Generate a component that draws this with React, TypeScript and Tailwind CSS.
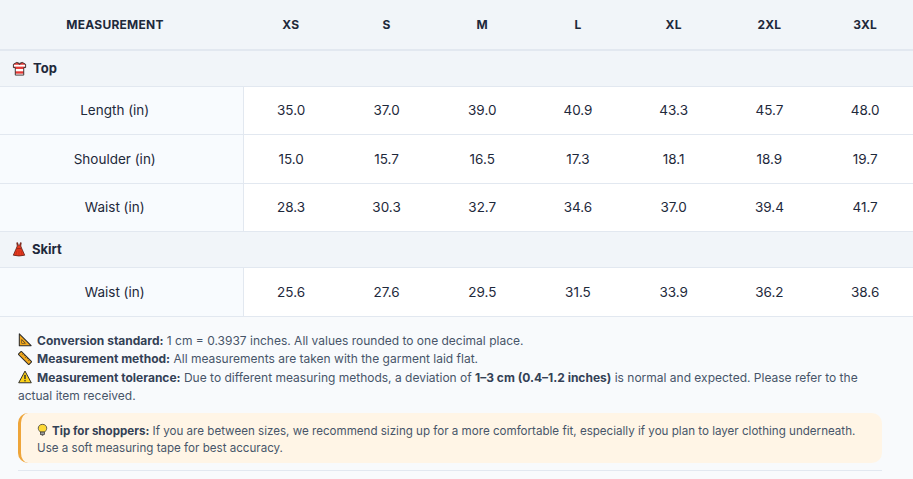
import React from "react";

const sizes = ["XS", "S", "M", "L", "XL", "2XL", "3XL"];

const topRows: [string, string[]][] = [
  ["Length (in)", ["35.0", "37.0", "39.0", "40.9", "43.3", "45.7", "48.0"]],
  ["Shoulder (in)", ["15.0", "15.7", "16.5", "17.3", "18.1", "18.9", "19.7"]],
  ["Waist (in)", ["28.3", "30.3", "32.7", "34.6", "37.0", "39.4", "41.7"]],
];
const skirtRows: [string, string[]][] = [
  ["Waist (in)", ["25.6", "27.6", "29.5", "31.5", "33.9", "36.2", "38.6"]],
];

function ShirtIcon() {
  return (
    <svg width="15" height="15" viewBox="0 0 16 16" className="inline-block shrink-0">
      <defs>
        <clipPath id="shirtclip">
          <path d="M5 1.5 L1.5 3.5 L1.5 7 L3.5 7 L3.5 15 L12.5 15 L12.5 7 L14.5 7 L14.5 3.5 L11 1.5 Q8 3.5 5 1.5 Z" />
        </clipPath>
      </defs>
      <g clipPath="url(#shirtclip)">
        <rect x="0" y="0" width="16" height="16" fill="#ffffff" />
        <rect x="0" y="1" width="16" height="3" fill="#e53935" />
        <rect x="0" y="6" width="16" height="2.5" fill="#e53935" />
        <rect x="0" y="11" width="16" height="2.5" fill="#e53935" />
      </g>
      <path
        d="M5 1.5 L1.5 3.5 L1.5 7 L3.5 7 L3.5 15 L12.5 15 L12.5 7 L14.5 7 L14.5 3.5 L11 1.5 Q8 3.5 5 1.5 Z"
        fill="none"
        stroke="#3b2a2a"
        strokeWidth="1"
        strokeLinejoin="round"
      />
      <path d="M6 2 L8 4 L10 2" fill="none" stroke="#3b2a2a" strokeWidth="0.8" />
    </svg>
  );
}

function DressIcon() {
  return (
    <svg width="14" height="15" viewBox="0 0 16 17" className="inline-block shrink-0">
      <path
        d="M5.5 0.8 L6 4.5 L4.8 7.5 L1.5 15 Q8 16.8 14.5 15 L11.2 7.5 L10 4.5 L10.5 0.8 L9.6 0.8 L9 3.5 L7 3.5 L6.4 0.8 Z"
        fill="#e53920"
        stroke="#5a1a10"
        strokeWidth="0.9"
        strokeLinejoin="round"
      />
      <path d="M5 7.5 L11 7.5" stroke="#7a1f10" strokeWidth="0.8" />
      <path d="M5.5 10 L4.5 15.3 M8 9.5 L8 15.8 M10.5 10 L11.5 15.3" stroke="#b02a14" strokeWidth="0.6" />
    </svg>
  );
}

function TriangleRulerIcon() {
  return (
    <svg width="14" height="14" viewBox="0 0 16 16" className="inline-block shrink-0">
      <path d="M1.5 1 L15 14.5 L1.5 14.5 Z" fill="#f2a81d" stroke="#2b2b2b" strokeWidth="1.2" strokeLinejoin="round" />
      <path d="M4 6.8 L9 12 L4 12 Z" fill="#2b2b2b" />
      <path d="M4.6 8.2 L7.6 11.4 L4.6 11.4 Z" fill="#f2a81d" />
    </svg>
  );
}

function StraightRulerIcon() {
  return (
    <svg width="14" height="14" viewBox="0 0 16 16" className="inline-block shrink-0">
      <g transform="rotate(45 8 8)">
        <rect x="-0.5" y="5.6" width="17" height="4.8" rx="0.6" fill="#f2a81d" stroke="#2b2b2b" strokeWidth="1.1" />
        <path d="M3 5.8 V7.6 M5.5 5.8 V7 M8 5.8 V7.6 M10.5 5.8 V7 M13 5.8 V7.6" stroke="#2b2b2b" strokeWidth="0.7" />
      </g>
    </svg>
  );
}

function WarningIcon() {
  return (
    <svg width="14" height="14" viewBox="0 0 16 16" className="inline-block shrink-0">
      <path d="M8 1.2 L15.2 14.6 L0.8 14.6 Z" fill="#fcd116" stroke="#2b2b2b" strokeWidth="1.1" strokeLinejoin="round" />
      <rect x="7.2" y="5.5" width="1.6" height="5" rx="0.5" fill="#2b2b2b" />
      <circle cx="8" cy="12.3" r="0.9" fill="#2b2b2b" />
    </svg>
  );
}

function BulbIcon() {
  return (
    <svg width="11" height="14" viewBox="0 0 14 16" className="inline-block shrink-0">
      <path
        d="M7 0.8 C3.6 0.8 1.6 3.2 1.6 5.8 C1.6 8 3.2 9.2 4.2 10.6 L9.8 10.6 C10.8 9.2 12.4 8 12.4 5.8 C12.4 3.2 10.4 0.8 7 0.8 Z"
        fill="#fdd835"
        stroke="#3a3a3a"
        strokeWidth="1"
      />
      <rect x="4.3" y="10.6" width="5.4" height="3.2" fill="#9e9e9e" stroke="#3a3a3a" strokeWidth="0.9" />
      <path d="M5.6 14 L8.4 14 L7.8 15.3 L6.2 15.3 Z" fill="#5a5a5a" />
    </svg>
  );
}

function CategoryRow({ icon, label }: { icon: React.ReactNode; label: string }) {
  return (
    <tr className="bg-[#f1f5f9] border-b border-[#e2e8f0]">
      <td colSpan={8} className="h-[36px] pl-3">
        <div className="flex items-center gap-[6px] text-[13px] font-bold text-[#1e293b]">
          {icon}
          <span>{label}</span>
        </div>
      </td>
    </tr>
  );
}

function DataRow({ label, values }: { label: string; values: string[] }) {
  return (
    <tr className="border-b border-[#e2e8f0]">
      <td className="h-[48.5px] bg-[#f8fbfe] border-r border-[#e2e8f0] pl-3 pr-[25px] text-center text-[13.5px] text-[#1e293b]">
        {label}
      </td>
      {values.map((v, i) => (
        <td key={i} className="h-[48.5px] bg-white text-center text-[13.5px] text-[#1e293b]">
          {v}
        </td>
      ))}
    </tr>
  );
}

export default function App() {
  return (
    <div className="w-[913px] min-h-[479px] bg-[#f8fafc] font-['Inter',sans-serif]">
      <table className="w-full table-fixed border-collapse">
        <colgroup>
          <col className="w-[243px]" />
          {sizes.map((s) => (
            <col key={s} />
          ))}
        </colgroup>
        <thead>
          <tr className="bg-[#f1f5f9] border-b-2 border-[#e2e8f0]">
            <th className="h-[50px] pl-3 pr-[25px] text-center text-[12px] font-bold uppercase tracking-[0.02em] text-[#1e293b]">
              Measurement
            </th>
            {sizes.map((s) => (
              <th key={s} className="h-[50px] text-center text-[12px] font-bold text-[#1e293b] tracking-[0.02em]">
                {s}
              </th>
            ))}
          </tr>
        </thead>
        <tbody>
          <CategoryRow icon={<ShirtIcon />} label="Top" />
          {topRows.map(([l, v]) => (
            <DataRow key={l} label={l} values={v} />
          ))}
          <CategoryRow icon={<DressIcon />} label="Skirt" />
          {skirtRows.map(([l, v]) => (
            <DataRow key={l + "s"} label={l} values={v} />
          ))}
        </tbody>
      </table>

      <div className="w-[864px] ml-[18px] pt-[15px] text-[12px] leading-[18.5px] text-[#475569]">
        <p>
          <span className="inline-flex items-center align-[-2px] mr-[5px]">
            <TriangleRulerIcon />
          </span>
          <strong className="font-bold text-[#334155]">Conversion standard:</strong> 1 cm = 0.3937 inches. All values
          rounded to one decimal place.
        </p>
        <p>
          <span className="inline-flex items-center align-[-2px] mr-[5px]">
            <StraightRulerIcon />
          </span>
          <strong className="font-bold text-[#334155]">Measurement method:</strong> All measurements are taken with the
          garment laid flat.
        </p>
        <p>
          <span className="inline-flex items-center align-[-2px] mr-[5px]">
            <WarningIcon />
          </span>
          <strong className="font-bold text-[#334155]">Measurement tolerance:</strong> Due to different measuring
          methods, a deviation of <strong className="font-bold text-[#334155]">1–3 cm (0.4–1.2 inches)</strong> is
          normal and expected. Please refer to the actual item received.
        </p>

        <div className="mt-[7px] rounded-[10px] border-l-[3px] border-[#eea53a] bg-[#fff5e6] pt-[10px] pb-[6px] pl-4 pr-5 text-[11.6px] leading-[17px] text-[#475569]">
          <span className="inline-flex items-center align-[-2px] mr-[4px]">
            <BulbIcon />
          </span>
          <strong className="font-bold text-[#334155]">Tip for shoppers:</strong> If you are between sizes, we recommend
          sizing up for a more comfortable fit, especially if you plan to layer clothing underneath. Use a soft
          measuring tape for best accuracy.
        </div>

        <div className="mt-[7px] h-px bg-[#e2e8f0]" />
      </div>
    </div>
  );
}
